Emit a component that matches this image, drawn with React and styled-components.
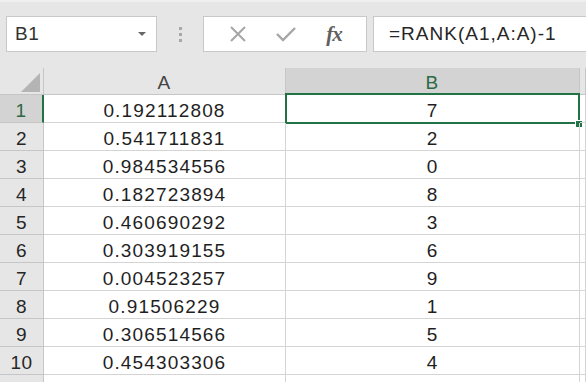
import React from "react";
import styled, { createGlobalStyle } from "styled-components";

const GlobalStyle = createGlobalStyle`
  html, body {
    margin: 0;
    padding: 0;
    background: #ffffff;
  }
  body {
    font-family: "Liberation Sans", Arial, sans-serif;
  }
`;

const Sheet = styled.div`
  width: 586px;
  height: 382px;
  overflow: hidden;
  display: flex;
  flex-direction: column;
  background: #e6e6e6;
`;

const Toolbar = styled.div`
  height: 68px;
  flex-shrink: 0;
  box-sizing: border-box;
  padding: 14px 0 16px 6px;
  display: flex;
  align-items: stretch;
  background: #e6e6e6;
  border-top: 2px solid #efefef;
`;

const NameBox = styled.div`
  width: 151px;
  box-sizing: border-box;
  background: #fff;
  border: 1px solid #c8c8c8;
  display: flex;
  align-items: center;
  justify-content: space-between;
  padding: 0 10px 0 8px;
  font-size: 19px;
  letter-spacing: 0.5px;
  color: #333;
`;

const Caret = styled.span`
  width: 0;
  height: 0;
  border-left: 4px solid transparent;
  border-right: 4px solid transparent;
  border-top: 4px solid #666;
`;

const Dots = styled.div`
  width: 46px;
  display: flex;
  flex-direction: column;
  align-items: center;
  justify-content: center;
  gap: 3px;
  span {
    width: 3px;
    height: 3px;
    background: #a8a8a8;
  }
`;

const ButtonBox = styled.div`
  width: 164px;
  box-sizing: border-box;
  background: #fff;
  border: 1px solid #c8c8c8;
  display: flex;
  align-items: center;
  justify-content: space-around;
  padding: 0 8px 0 10px;
`;

const IconSlot = styled.div`
  width: 34px;
  display: flex;
  align-items: center;
  justify-content: center;
`;

const Fx = styled.span`
  font-family: "Liberation Serif", "Times New Roman", serif;
  font-style: italic;
  font-weight: bold;
  font-size: 21px;
  color: #606060;
  letter-spacing: -1px;
`;

const FormulaBox = styled.div`
  flex: 1;
  margin-left: 6px;
  background: #fff;
  border: 1px solid #c8c8c8;
  border-right: none;
  display: flex;
  align-items: center;
  padding-left: 15px;
  font-size: 19px;
  letter-spacing: 1px;
  color: #262626;
`;

const Grid = styled.div`
  display: grid;
  grid-template-columns: 44px 242px 294px 1fr;
  grid-template-rows: 27px;
  grid-auto-rows: 28px;
  background: #fff;
  flex: 1;
  min-height: 0;
`;

const Cell = styled.div`
  box-sizing: border-box;
  border-right: 1px solid #d4d4d4;
  border-bottom: 1px solid #d4d4d4;
  display: flex;
  align-items: center;
  justify-content: center;
  font-size: 19px;
  letter-spacing: 1.15px;
  color: #1f1f1f;
  position: relative;
  padding-top: 4px;
`;

const ColHead = styled(Cell)`
  background: ${(p) => (p.$active ? "#d3d3d3" : "#e6e6e6")};
  color: ${(p) => (p.$active ? "#2b6a45" : "#444")};
  border-right-color: #c6c6c6;
  border-bottom-color: ${(p) => (p.$active ? "#217346" : "#c6c6c6")};
  border-bottom-width: ${(p) => (p.$active ? "2px" : "1px")};
  padding-top: 4px;
`;

const Corner = styled(Cell)`
  background: #e6e6e6;
  border-right-color: #c6c6c6;
  border-bottom-color: #c6c6c6;
  &::after {
    content: "";
    position: absolute;
    right: 3px;
    bottom: 2px;
    width: 19px;
    height: 19px;
    background: #b4b4b4;
    clip-path: polygon(100% 0, 100% 100%, 0 100%);
  }
`;

const RowHead = styled(Cell)`
  background: ${(p) => (p.$active ? "#d3d3d3" : "#e6e6e6")};
  color: ${(p) => (p.$active ? "#2b6a45" : "#262626")};
  border-right: ${(p) => (p.$active ? "2px solid #217346" : "1px solid #c6c6c6")};
  border-bottom-color: #c6c6c6;
  letter-spacing: 0.5px;
`;

const Selected = styled(Cell)`
  &::before {
    content: "";
    position: absolute;
    left: -1px;
    top: -2px;
    right: -1px;
    bottom: -2px;
    border: 2px solid #217346;
    pointer-events: none;
  }
  &::after {
    content: "";
    position: absolute;
    right: -3px;
    bottom: -5px;
    width: 6px;
    height: 6px;
    background: #217346;
    border: 1px solid #fff;
    border-right: none;
    border-bottom: none;
  }
`;

const values = [
  ["0.192112808", 7],
  ["0.541711831", 2],
  ["0.984534556", 0],
  ["0.182723894", 8],
  ["0.460690292", 3],
  ["0.303919155", 6],
  ["0.004523257", 9],
  ["0.91506229", 1],
  ["0.306514566", 5],
  ["0.454303306", 4],
];

export default function App() {
  return (
    <>
      <GlobalStyle />
      <Sheet>
        <Toolbar>
          <NameBox>
            B1
            <Caret />
          </NameBox>
          <Dots>
            <span />
            <span />
            <span />
          </Dots>
          <ButtonBox>
            <IconSlot>
              <svg width="18" height="18" viewBox="0 0 18 18">
                <path d="M2 2 L16 16 M16 2 L2 16" stroke="#a6a6a6" strokeWidth="2" fill="none" />
              </svg>
            </IconSlot>
            <IconSlot>
              <svg width="20" height="16" viewBox="0 0 20 16">
                <path d="M1 8 L7 14 L19 2" stroke="#a6a6a6" strokeWidth="2.4" fill="none" />
              </svg>
            </IconSlot>
            <IconSlot>
              <Fx>fx</Fx>
            </IconSlot>
          </ButtonBox>
          <FormulaBox>=RANK(A1,A:A)-1</FormulaBox>
        </Toolbar>
        <Grid>
          <Corner />
          <ColHead>A</ColHead>
          <ColHead $active>B</ColHead>
          <ColHead />
          {values.map(([a, b], i) => (
            <React.Fragment key={i}>
              <RowHead $active={i === 0}>{i + 1}</RowHead>
              <Cell>{a}</Cell>
              {i === 0 ? <Selected>{b}</Selected> : <Cell>{b}</Cell>}
              <Cell />
            </React.Fragment>
          ))}
          <RowHead />
          <Cell />
          <Cell />
          <Cell />
        </Grid>
      </Sheet>
    </>
  );
}
